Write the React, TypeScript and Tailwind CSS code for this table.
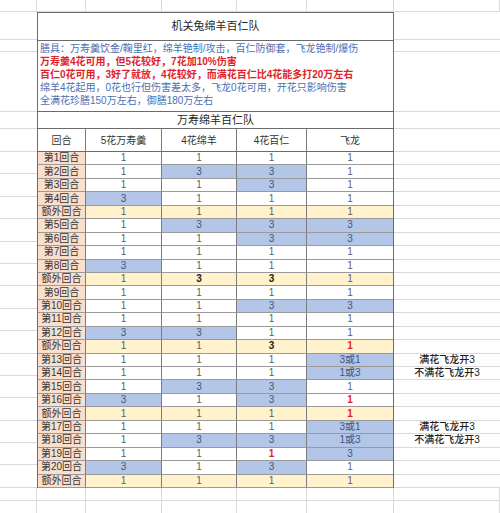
import React from 'react';

// 表格数据：b=蓝底，r=红字加粗，k=黑字加粗
const rows: { label: string; vals: string; extra?: boolean; note?: string }[] = [
  { label: '第1回合', vals: '1 1 1 1' },
  { label: '第2回合', vals: '1 3b 3b 1' },
  { label: '第3回合', vals: '1 1 3b 1' },
  { label: '第4回合', vals: '3b 1 1 1' },
  { label: '额外回合', vals: '1 1 1 1', extra: true },
  { label: '第5回合', vals: '1 3b 3b 3b' },
  { label: '第6回合', vals: '1 1 3b 3b' },
  { label: '第7回合', vals: '1 1 1 1' },
  { label: '第8回合', vals: '3b 1 1 1' },
  { label: '额外回合', vals: '1 3k 3k 1', extra: true },
  { label: '第9回合', vals: '1 1 1 1' },
  { label: '第10回合', vals: '1 1 3b 3b' },
  { label: '第11回合', vals: '1 1 1 1' },
  { label: '第12回合', vals: '3b 3b 1 1' },
  { label: '额外回合', vals: '1 1 3k 1r', extra: true },
  { label: '第13回合', vals: '1 1 1 3或1b', note: '满花飞龙开3' },
  { label: '第14回合', vals: '1 1 1 1或3b', note: '不满花飞龙开3' },
  { label: '第15回合', vals: '1 3b 3b 1' },
  { label: '第16回合', vals: '3b 1 3b 1r' },
  { label: '额外回合', vals: '1 1 1 1r', extra: true },
  { label: '第17回合', vals: '1 1 1 3或1b', note: '满花飞龙开3' },
  { label: '第18回合', vals: '1 3b 3b 1或3b', note: '不满花飞龙开3' },
  { label: '第19回合', vals: '1 1 1r 3b' },
  { label: '第20回合', vals: '3b 1 3b 1' },
  { label: '额外回合', vals: '1 1 1 1', extra: true },
];

const colW = ['w-[76px]', 'w-[75px]', 'w-[70px]', 'w-[86px]'];
const bgCols = ['w-[37px]', 'w-[49px]', 'w-[76px]', 'w-[75px]', 'w-[70px]', 'w-[87px]', 'w-[106px]'];

function BgRow({ h }: { h: string }) {
  return (
    <div className={`flex ${h}`}>
      {bgCols.map((w, i) => (
        <div key={i} className={`${w} shrink-0 border-r border-b border-[#dadada]`} />
      ))}
    </div>
  );
}

function DataCell({ raw, extra, idx }: { raw: string; extra?: boolean; idx: number }) {
  const flag = raw.slice(-1);
  const hasFlag = ['b', 'r', 'k'].includes(flag);
  const text = hasFlag ? raw.slice(0, -1) : raw;
  let bg = extra ? 'bg-[#fff2cc]' : 'bg-white';
  let color = 'text-[#5f5f5f]';
  if (flag === 'b') {
    bg = 'bg-[#b4c6e7]';
    color = 'text-[#3f5680]';
  } else if (flag === 'r') {
    color = 'text-[#e0232a] font-bold';
  } else if (flag === 'k') {
    color = 'text-[#222] font-bold';
  }
  return (
    <div
      className={`${colW[idx]} shrink-0 ${idx < 3 ? 'border-r border-r-[#7c7c7c]' : ''} border-b border-b-[#9a9a9a] ${bg} ${color} flex items-center justify-center text-[10px] leading-none`}
    >
      {text}
    </div>
  );
}

export default function App() {
  return (
    <div className="w-[500px] h-[513px] overflow-hidden bg-white font-['Liberation_Sans','Noto_Sans_CJK_SC',sans-serif]">
      <BgRow h="h-[12px]" />

      <div className="flex">
        {/* 左侧空白列 */}
        <div className="w-[37px] shrink-0 flex flex-col">
          {['h-[28px]', 'h-[12px]', 'h-[60px]', 'h-[17px]', 'h-[23px]'].map((h, i) => (
            <div key={i} className={`${h} border-b border-[#dadada]`} />
          ))}
          {Array.from({ length: 15 }, (_, i) => (
            <div key={i} className="h-[22.4px] border-b border-[#dadada]" />
          ))}
        </div>

        {/* 主表格 */}
        <div className="w-[357px] shrink-0 border-l border-r border-t border-[#6b6b6b] flex flex-col">
          <div className="h-[28px] border-b border-[#6b6b6b] flex items-center justify-center text-[11px] text-[#262626]">
            机关兔绵羊百仁队
          </div>
          <div className="h-[71px] border-b border-[#6b6b6b] pl-[2px] pt-[1px] text-[10px] leading-[13px] whitespace-nowrap">
            <div className="text-[#4a6fb3]">膳具：万寿羹饮金/鞠里红，绵羊铯制/攻击，百仁防御套，飞龙铯制/爆伤</div>
            <div className="text-[#e0232a] font-bold">万寿羹4花可用，但5花较好，7花加10%伤害</div>
            <div className="text-[#e0232a] font-bold">百仁0花可用，3好了就放，4花较好，而满花百仁比4花能多打20万左右</div>
            <div className="text-[#4a6fb3]">绵羊4花起用，0花也行但伤害差太多，飞龙0花可用，开花只影响伤害</div>
            <div className="text-[#4a6fb3]">全满花珍膳150万左右，御膳180万左右</div>
          </div>
          <div className="h-[17px] border-b border-[#6b6b6b] flex items-center justify-center text-[11px] text-[#262626]">
            万寿绵羊百仁队
          </div>
          <div className="h-[23px] flex border-b border-[#6b6b6b] text-[10px] text-[#333]">
            <div className="w-[48px] shrink-0 border-r border-[#7c7c7c] flex items-center justify-center">回合</div>
            {['5花万寿羹', '4花绵羊', '4花百仁', '飞龙'].map((t, i) => (
              <div
                key={t}
                className={`${colW[i]} shrink-0 ${i < 3 ? 'border-r border-[#7c7c7c]' : ''} flex items-center justify-center`}
              >
                {t}
              </div>
            ))}
          </div>
          {rows.map((r, ri) => (
            <div key={ri} className="h-[13.44px] flex">
              <div className="w-[48px] shrink-0 border-r border-r-[#7c7c7c] border-b border-b-[#9a9a9a] bg-[#fadfcd] flex items-center justify-center text-[10px] leading-none text-[#333]">
                {r.label}
              </div>
              {r.vals.split(' ').map((v, i) => (
                <DataCell key={i} raw={v} extra={r.extra} idx={i} />
              ))}
            </div>
          ))}
        </div>

        {/* 右侧备注列 */}
        <div className="w-[106px] shrink-0 flex flex-col">
          {['h-[28px]', 'h-[12px]', 'h-[60px]', 'h-[17px]', 'h-[23px]'].map((h, i) => (
            <div key={i} className={`${h} border-b border-[#dadada]`} />
          ))}
          {rows.map((r, ri) => (
            <div
              key={ri}
              className="h-[13.44px] border-b border-[#dadada] flex items-center justify-center text-[10px] leading-none font-medium text-[#1e1e1e]"
            >
              {r.note}
            </div>
          ))}
        </div>
      </div>

      <BgRow h="h-[13px]" />
      <BgRow h="h-[13px]" />
    </div>
  );
}
